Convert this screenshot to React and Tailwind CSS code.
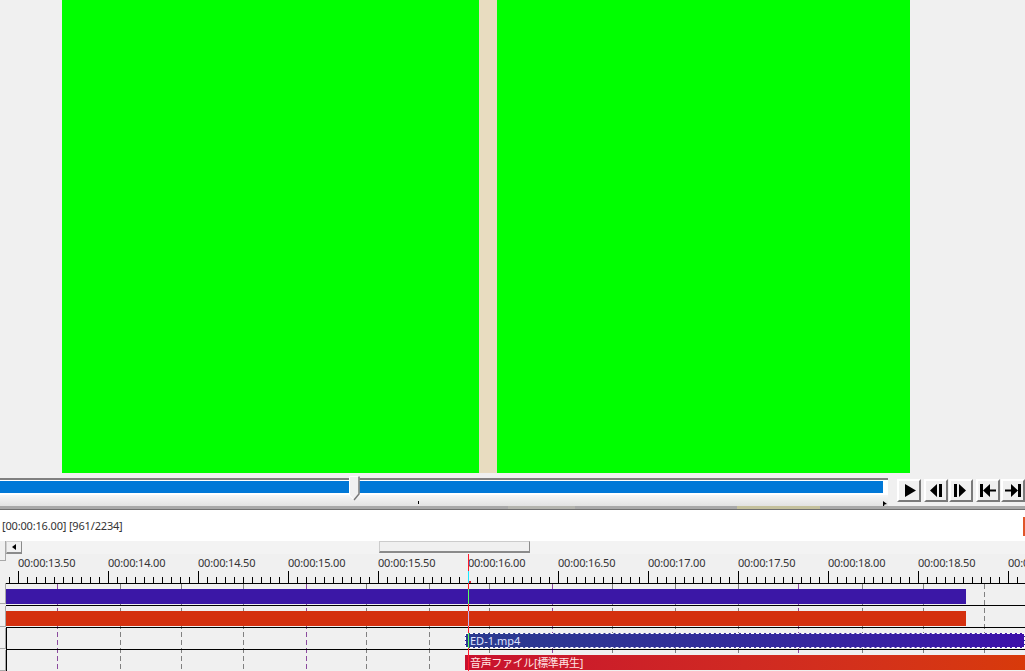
import React from 'react';

const labels = [
    '00:00:13.50', '00:00:14.00', '00:00:14.50', '00:00:15.00', '00:00:15.50', '00:00:16.00',
    '00:00:16.50', '00:00:17.00', '00:00:17.50', '00:00:18.00', '00:00:18.50', '00:00:19.00',
];

// positions in page pixels, x of the content column is 6
const gridLines = [57, 120, 181, 243, 306, 366, 429, 489, 552, 612, 675, 738, 798, 862, 923, 984];
const gutterBoxes = ['h-[20px] mb-[22px]', 'h-[21px] mb-[2px]', 'h-[21px] mb-[1px]', 'h-[21px] mb-[1px]', 'h-[21px]'];

function TransportButton({ d, className = 'w-6' }) {
    return (
        <button className={`${className} h-[23px] bg-[#f0f0f0] border-t-2 border-l-2 border-t-white border-l-white border-r-2 border-b-2 border-r-[#7a7a7a] border-b-[#7a7a7a] flex items-center justify-center`}>
            <svg width="20" height="19" viewBox="0 0 20 19" fill="#000">
                <path d={d} />
            </svg>
        </button>
    );
}

function Preview() {
    return (
        <div className="h-[473px] shrink-0 pl-[62px] flex bg-[#f0f0f0]">
            <div className="w-[417px] bg-[#00ff00]"></div>
            <div className="w-[18px] bg-[#e8dcc0]"></div>
            <div className="w-[413px] bg-[#00ff00]"></div>
        </div>
    );
}

function SeekBar() {
    return (
        <div className="h-[37px] shrink-0 flex flex-col bg-[#f0f0f0]">
            <div className="h-[33px] flex">
                <div className="w-[888px] relative pt-[5px]">
                    <div className="h-[17px] border-t-2 border-t-[#808080] bg-white pt-px pb-0.5 pr-[5px]">
                        <div className="h-3 bg-[#0078d7]"></div>
                    </div>
                    <div className="h-[11px] bg-linear-to-b from-[#f6f6f6] to-[#e2e2e2]"></div>
                    {/* thumb */}
                    <svg className="absolute left-[349px] top-[3px]" width="11" height="25" viewBox="0 0 11 25">
                        <path d="M0.5 0.5H10V18L5 24L0.5 19Z" fill="#f0f0f0" stroke="#ffffff" />
                        <path d="M10 0.5V18L5 24" fill="none" stroke="#7a7a7a" strokeWidth="1.5" />
                    </svg>
                    <div className="absolute left-[418px] top-[28px] w-px h-[3px] bg-black"></div>
                    <svg className="absolute left-[883px] top-[28px]" width="4" height="5" viewBox="0 0 4 5">
                        <path d="M0 0L4 3L1.5 3.5L1 5L0 5Z" fill="#000" />
                    </svg>
                </div>
                <div className="flex-1 flex pt-[6px] pl-[9px] items-start">
                    <TransportButton className="w-6 mr-[3px]" d="M6 3L17 9.5L6 16Z" />
                    <TransportButton className="w-6 mr-px" d="M4 9.5L11 3V16ZM13 3H16V16H13Z" />
                    <TransportButton className="w-6 mr-[3px]" d="M3 3H6V16H3ZM8 3L15 9.5L8 16Z" />
                    <TransportButton className="w-6 mr-px" d="M2 3H5V16H2ZM5 9.5L12 3V8.5H18V10.5H12V16Z" />
                    <TransportButton className="w-6" d="M15 3H18V16H15ZM15 9.5L8 3V8.5H2V10.5H8V16Z" />
                </div>
            </div>
            {/* splitter with the two faded patches */}
            <div className="h-1 relative bg-[#a8a8a8] border-b border-b-[#707070]">
                <div className="absolute left-[508px] top-0 w-[67px] h-[3px] bg-[#b4b4ae]"></div>
                <div className="absolute left-[737px] top-0 w-[83px] h-[3px] bg-[#c4c09c]"></div>
            </div>
        </div>
    );
}

function InfoBar() {
    return (
        <div className="h-[31px] shrink-0 bg-white flex items-center justify-between pl-0.5">
            <span className="pt-0.5 text-[11px] tracking-[-0.17px] text-[#333]">[00:00:16.00] [961/2234]</span>
            <div className="w-0.5 h-[19px] mt-[1px] bg-[#e0562a]"></div>
        </div>
    );
}

function ScrollRow() {
    return (
        <div className="h-[13px] shrink-0 bg-[#f3f3f3] relative">
            <button className="w-4 h-[13px] bg-[#f0f0f0] border-t border-l border-t-[#d0d0d0] border-l-[#d0d0d0] border-r border-b-2 border-r-[#8a8a8a] border-b-[#8a8a8a] flex items-center justify-center">
                <svg width="4" height="6" viewBox="0 0 4 6"><path d="M0 3L4 0V6Z" fill="#000" /></svg>
            </button>
            <div className="absolute left-[373px] top-0 w-[151px] h-3 bg-[#f0f0f0] border-t border-l border-t-[#cccccc] border-l-[#cccccc] border-r border-b-2 border-r-[#8a8a8a] border-b-[#8a8a8a]"></div>
        </div>
    );
}

function Ruler() {
    const minor = Array.from({ length: 114 }, (_, i) => 3 + i * 9);
    return (
        <div className="h-[30px] bg-[#f0f0f0] border-b border-b-black flex flex-col">
            <div className="flex h-[17px] pl-3 pt-0.5 items-center whitespace-nowrap overflow-hidden">
                {labels.map((label) => (
                    <div key={label} className="w-[90px] shrink-0 text-[11px] tracking-[-0.17px] text-[#333]">{label}</div>
                ))}
            </div>
            <svg className="block" width="1019" height="12" viewBox="0 0 1019 12">
                {minor.map((x) => {
                    const major = (x - 12) % 90 === 0;
                    return <rect key={x} x={x} y={major ? 0 : 6} width="1" height={major ? 12 : 6} fill="#000" />;
                })}
            </svg>
        </div>
    );
}

function Track({ children, edge, last }) {
    return (
        <div className={`h-[22px] pt-[5px] ${last ? '' : 'border-b border-b-black'} ${edge ? 'border-l border-l-black' : ''}`}>
            {children}
        </div>
    );
}

function Tracks() {
    return (
        <div className="relative">
            {/* dashed layer lines sit behind the clips */}
            <svg className="absolute left-0 top-0" width="1019" height="87" viewBox="0 0 1019 87">
                {gridLines.map((x, i) => (
                    <line
                        key={x}
                        x1={x - 5.5}
                        x2={x - 5.5}
                        y1="0"
                        y2="87"
                        stroke={i % 4 === 0 ? '#8b4a9e' : '#808080'}
                        strokeDasharray="5 3"
                    />
                ))}
            </svg>
            <div className="relative flex flex-col">
                <Track>
                    <div className="w-[960px] h-[15px] bg-[#3b17a6]"></div>
                </Track>
                <Track>
                    <div className="w-[960px] h-[15px] bg-[#d4300e]"></div>
                </Track>
                <Track edge>
                    <div className="ml-[458px] h-[15px] bg-linear-to-r from-[#2a3a8e] to-[#3d10aa] border border-dashed border-white flex items-center overflow-hidden">
                        <span className="pl-[4px] text-[11px] leading-none text-[#dfe3ff]">ED-1.mp4</span>
                    </div>
                </Track>
                <Track edge last>
                    <div className="ml-[458px] h-[15px] bg-linear-to-r from-[#c8102e] to-[#d83a0a] flex items-center overflow-hidden">
                        <span className="pl-[5px] text-[11px] tracking-[-0.35px] leading-none text-[#ffe4e4] whitespace-nowrap">音声ファイル[標準再生]</span>
                    </div>
                </Track>
            </div>
        </div>
    );
}

function Playhead() {
    return (
        <svg className="absolute left-[462px] top-0" width="4" height="117" viewBox="0 0 4 117">
            <rect x="0" y="0" width="1" height="117" fill="#ff1a2a" />
            <rect x="0" y="17" width="1" height="12" fill="#19e6ff" />
            <rect x="0" y="35" width="1" height="15" fill="#5dff5d" />
            <rect x="0" y="57" width="1" height="15" fill="#c4b5f0" />
            <rect x="0" y="79" width="1" height="15" fill="#5dff5d" />
            <rect x="1" y="27" width="2" height="2" fill="#e0202a" />
        </svg>
    );
}

function App() {
    return (
        <div className="w-[1025px] h-[671px] overflow-hidden flex flex-col bg-[#f0f0f0]" style={{ fontFamily: '"Noto Sans", "Noto Sans CJK JP", sans-serif' }}>
            <Preview />
            <SeekBar />
            <InfoBar />
            <div className="flex flex-1 min-h-0 overflow-hidden">
                <div className="w-[6px] shrink-0 flex flex-col">
                    {gutterBoxes.map((box, i) => (
                        <div key={i} className={`${box} border-r border-b border-[#a8a8a8]`}></div>
                    ))}
                </div>
                <div className="flex-1 flex flex-col min-w-0">
                    <ScrollRow />
                    <div className="relative flex-1">
                        <Ruler />
                        <Tracks />
                        <Playhead />
                    </div>
                </div>
            </div>
        </div>
    );
}

export default App;
